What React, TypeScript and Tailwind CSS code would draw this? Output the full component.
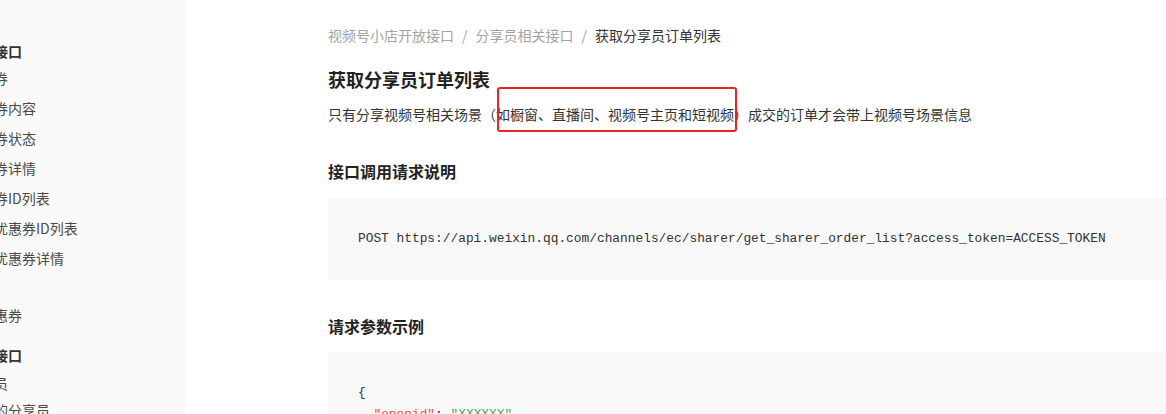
import React from "react";

const cjk = { fontFamily: '"Noto Sans CJK SC", "Noto Sans", sans-serif' };
const mono = { fontFamily: '"Liberation Mono", "DejaVu Sans Mono", monospace' };

function SideHeading({ text, className = "" }: { text: string; className?: string }) {
  return (
    <div className={"h-[20px] leading-[20px] text-[14px] font-bold text-[#333] whitespace-nowrap ml-[-48px] " + className}>
      {text}
    </div>
  );
}

function SideItem({ text, h = "h-[30px] leading-[30px]" }: { text: string; h?: string }) {
  return (
    <div className={h + " text-[14px] text-[#4a4a4a] whitespace-nowrap ml-[-62px]"}>{text}</div>
  );
}

export default function App() {
  return (
    <div className="w-[1166px] h-[414px] overflow-hidden flex bg-white" style={cjk}>
      <aside className="w-[185px] shrink-0 bg-[#fafafa] overflow-hidden pt-[41px]">
        <SideHeading text="优惠券接口" />
        <div className="mt-[2px]">
          <SideItem text="创建优惠券" />
          <SideItem text="更新优惠券内容" />
          <SideItem text="更新优惠券状态" />
          <SideItem text="获取优惠券详情" />
          <SideItem text="获取优惠券ID列表" />
          <SideItem text="获取用户优惠券ID列表" />
          <SideItem text="获取用户优惠券详情" />
          <SideItem text="发放券" h="h-[27px] leading-[27px]" />
          <SideItem text="用户的优惠券" />
        </div>
        <SideHeading text="分享员接口" className="mt-[15px]" />
        <div className="mt-[5px]">
          <SideItem text="邀请分享员" h="h-[27px] leading-[27px]" />
          <SideItem text="获取绑定的分享员" h="h-[27px] leading-[27px]" />
        </div>
      </aside>
      <main className="shrink-0 pl-[143px] pt-[25px]">
        <div className="w-[900px]">
          <nav className="flex items-center h-[20px] leading-[20px] text-[14px] text-[#a3a3a3] whitespace-nowrap">
            <span>视频号小店开放接口</span>
            <span className="mx-[8px]">/</span>
            <span>分享员相关接口</span>
            <span className="mx-[8px]">/</span>
            <span className="text-[#333]">获取分享员订单列表</span>
          </nav>
          <h1 className="mt-[21px] text-[18px] leading-[26px] font-bold text-[#222]">获取分享员订单列表</h1>
          <p className="relative mt-[11px] text-[14px] leading-[22px] text-[#333] whitespace-nowrap">
            只有分享视频号相关场景（如橱窗、直播间、视频号主页和短视频）成交的订单才会带上视频号场景信息
            <span className="absolute left-[169px] top-[-16px] w-[240px] h-[45px] border-2 border-[#e92424] rounded-[3px]" />
          </p>
          <h2 className="mt-[34px] text-[16px] leading-[24px] font-bold text-[#222]">接口调用请求说明</h2>
          <div className="mt-[15px] bg-[#f8f8f8] p-[30px] text-[12.85px] leading-[22px] text-[#333] whitespace-pre" style={mono}>
            POST https://api.weixin.qq.com/channels/ec/sharer/get_sharer_order_list?access_token=ACCESS_TOKEN
          </div>
          <h2 className="mt-[34px] text-[16px] leading-[24px] font-bold text-[#222]">请求参数示例</h2>
          <div className="mt-[14px] bg-[#f8f8f8] p-[30px] text-[12.85px] leading-[22px] text-[#333] whitespace-pre" style={mono}>
            <div>{"{"}</div>
            <div>
              {"  "}
              <span className="text-[#e5533d]">"openid"</span>
              {": "}
              <span className="text-[#52a869]">"XXXXXX"</span>
              {","}
            </div>
            <div>
              {"  "}
              <span className="text-[#e5533d]">"page"</span>
              {": "}
              <span className="text-[#52a869]">1</span>
            </div>
            <div>{"}"}</div>
          </div>
        </div>
      </main>
    </div>
  );
}
